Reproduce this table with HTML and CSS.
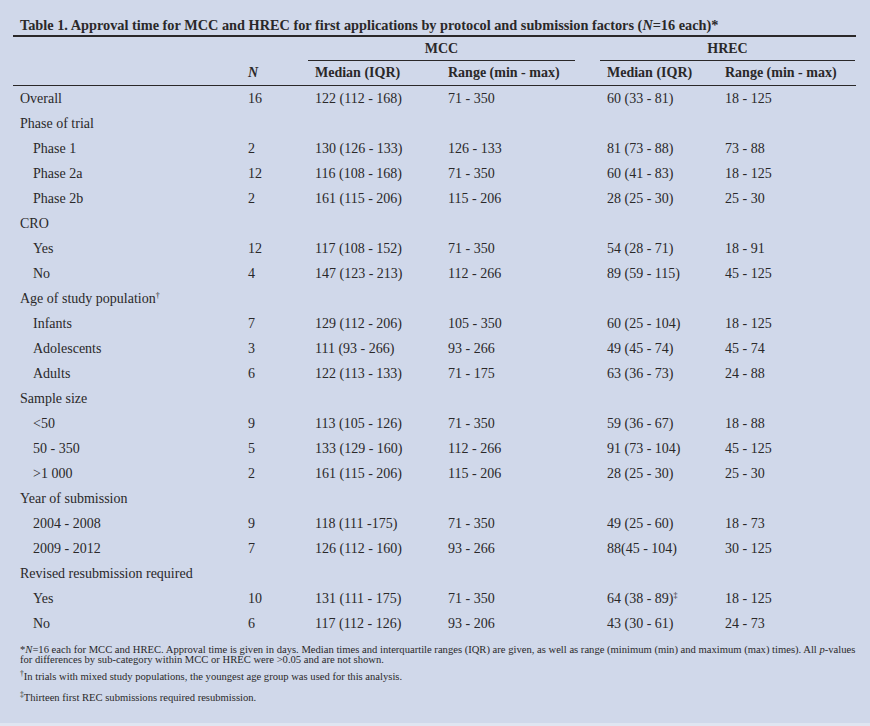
FILE: index.html
```html
<!DOCTYPE html>
<html>
<head>
<meta charset="utf-8">
<link rel="stylesheet" href="styles.css">
</head>
<body>
<div class="page">
  <h1 class="title">Table 1. Approval time for MCC and HREC for first applications by protocol and submission factors (<i>N</i>=16 each)*</h1>
  <table class="tbl">
    <colgroup>
      <col class="c1"><col class="c2"><col class="c3"><col class="c4"><col class="c5"><col class="c6">
    </colgroup>
    <thead>
      <tr class="grp">
        <th></th><th></th>
        <th colspan="2"><div class="span mcc">MCC</div></th>
        <th colspan="2"><div class="span hrec">HREC</div></th>
      </tr>
      <tr class="sub">
        <th></th><th><i>N</i></th>
        <th>Median (IQR)</th><th>Range (min - max)</th>
        <th>Median (IQR)</th><th>Range (min - max)</th>
      </tr>
    </thead>
    <tbody>
      <tr><td>Overall</td><td>16</td><td>122 (112 - 168)</td><td>71 - 350</td><td>60 (33 - 81)</td><td>18 - 125</td></tr>
      <tr><td colspan="6">Phase of trial</td></tr>
      <tr><td class="ind">Phase 1</td><td>2</td><td>130 (126 - 133)</td><td>126 - 133</td><td>81 (73 - 88)</td><td>73 - 88</td></tr>
      <tr><td class="ind">Phase 2a</td><td>12</td><td>116 (108 - 168)</td><td>71 - 350</td><td>60 (41 - 83)</td><td>18 - 125</td></tr>
      <tr><td class="ind">Phase 2b</td><td>2</td><td>161 (115 - 206)</td><td>115 - 206</td><td>28 (25 - 30)</td><td>25 - 30</td></tr>
      <tr><td colspan="6">CRO</td></tr>
      <tr><td class="ind">Yes</td><td>12</td><td>117 (108 - 152)</td><td>71 - 350</td><td>54 (28 - 71)</td><td>18 - 91</td></tr>
      <tr><td class="ind">No</td><td>4</td><td>147 (123 - 213)</td><td>112 - 266</td><td>89 (59 - 115)</td><td>45 - 125</td></tr>
      <tr><td colspan="6">Age of study population<sup class="mk">†</sup></td></tr>
      <tr><td class="ind">Infants</td><td>7</td><td>129 (112 - 206)</td><td>105 - 350</td><td>60 (25 - 104)</td><td>18 - 125</td></tr>
      <tr><td class="ind">Adolescents</td><td>3</td><td>111 (93 - 266)</td><td>93 - 266</td><td>49 (45 - 74)</td><td>45 - 74</td></tr>
      <tr><td class="ind">Adults</td><td>6</td><td>122 (113 - 133)</td><td>71 - 175</td><td>63 (36 - 73)</td><td>24 - 88</td></tr>
      <tr><td colspan="6">Sample size</td></tr>
      <tr><td class="ind">&lt;50</td><td>9</td><td>113 (105 - 126)</td><td>71 - 350</td><td>59 (36 - 67)</td><td>18 - 88</td></tr>
      <tr><td class="ind">50 - 350</td><td>5</td><td>133 (129 - 160)</td><td>112 - 266</td><td>91 (73 - 104)</td><td>45 - 125</td></tr>
      <tr><td class="ind">&gt;1 000</td><td>2</td><td>161 (115 - 206)</td><td>115 - 206</td><td>28 (25 - 30)</td><td>25 - 30</td></tr>
      <tr><td colspan="6">Year of submission</td></tr>
      <tr><td class="ind">2004 - 2008</td><td>9</td><td>118 (111 -175)</td><td>71 - 350</td><td>49 (25 - 60)</td><td>18 - 73</td></tr>
      <tr><td class="ind">2009 - 2012</td><td>7</td><td>126 (112 - 160)</td><td>93 - 266</td><td>88(45 - 104)</td><td>30 - 125</td></tr>
      <tr><td colspan="6">Revised resubmission required</td></tr>
      <tr><td class="ind">Yes</td><td>10</td><td>131 (111 - 175)</td><td>71 - 350</td><td>64 (38 - 89)<sup class="mk">‡</sup></td><td>18 - 125</td></tr>
      <tr><td class="ind">No</td><td>6</td><td>117 (112 - 126)</td><td>93 - 206</td><td>43 (30 - 61)</td><td>24 - 73</td></tr>
    </tbody>
  </table>
  <div class="notes">
    <p class="note first">*<i>N</i>=16 each for MCC and HREC. Approval time is given in days. Median times and interquartile ranges (IQR) are given, as well as range (minimum (min) and maximum (max) times). All <i>p</i>-values<br>for differences by sub-category within MCC or HREC were &gt;0.05 and are not shown.</p>
    <p class="note second"><sup class="fm">†</sup>In trials with mixed study populations, the youngest age group was used for this analysis.</p>
    <p class="note third"><sup class="fm">‡</sup>Thirteen first REC submissions required resubmission.</p>
  </div>
</div>
</body>
</html>
```

FILE: styles.css
```css
html {
  background: #dfe5f1;
}
body {
  margin: 0;
  background: #d0d8ea;
  height: 723px;
  color: #2a2829;
  font-family: "Liberation Serif", "Times New Roman", serif;
}
.page {
  padding: 0 14px 0 13px;
  width: 843px;
}
.title {
  margin: 0;
  padding: 15px 0 0 7px;
  height: 20px;
  line-height: 20px;
  font-size: 14.3px;
  font-weight: bold;
  border-bottom: 2px solid #2a2829;
  white-space: nowrap;
}
.tbl {
  width: 843px;
  border-collapse: collapse;
  table-layout: fixed;
  font-size: 14px;
}
.c1 { width: 228px; }
.c2 { width: 67px; }
.c3 { width: 133px; }
.c4 { width: 159px; }
.c5 { width: 118px; }
.c6 { width: 138px; }
.tbl th, .tbl td {
  padding: 0 0 0 7px;
  text-align: left;
  white-space: nowrap;
}
.tbl th {
  font-weight: bold;
}
.grp th {
  padding: 0;
  height: 24px;
  vertical-align: bottom;
}
.span {
  text-align: center;
  line-height: 23px;
  border-bottom: 1px solid #2a2829;
}
.mcc {
  margin-right: 25px;
}
.hrec {
  margin-right: 1px;
}
.sub th {
  height: 24px;
  line-height: 24px;
  border-bottom: 1px solid #2a2829;
}
.tbl td {
  height: 25px;
  line-height: 25px;
}
.tbl td.ind {
  padding-left: 20px;
}
.mk {
  font-size: 8px;
  line-height: 0;
  vertical-align: 5px;
}
.notes {
  padding: 9px 0 0 7px;
  width: 840px;
  font-size: 10.6px;
}
.note {
  margin: 0;
  line-height: 10px;
  white-space: nowrap;
}
.second {
  margin-top: 7px;
}
.third {
  margin-top: 11px;
}
.fm {
  font-size: 7.5px;
  line-height: 0;
  vertical-align: 4px;
}
```
